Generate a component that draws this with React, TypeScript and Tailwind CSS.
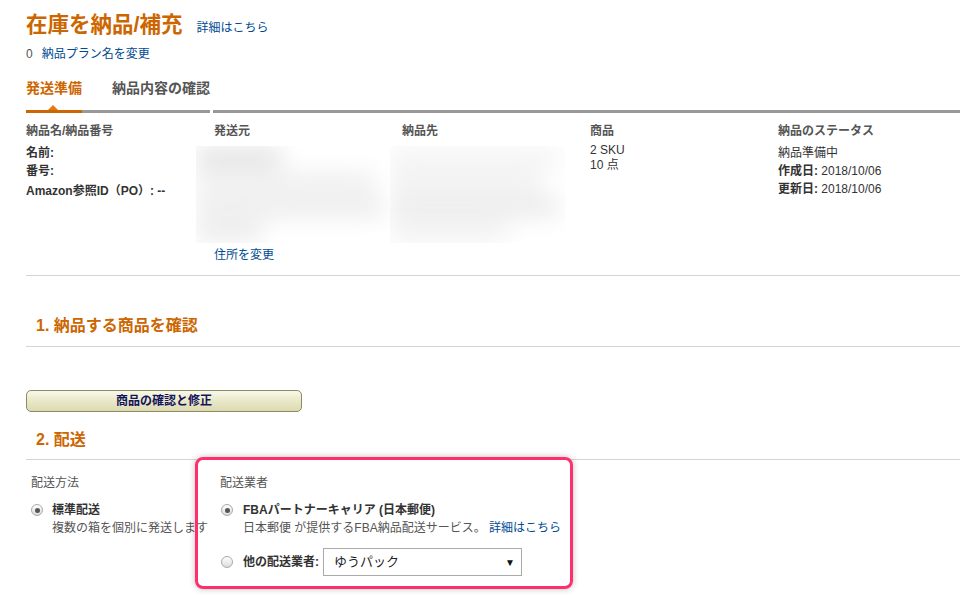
const font = "font-['Liberation_Sans','Noto_Sans_CJK_JP',sans-serif]";

function Radio({ checked }: { checked?: boolean }) {
  return (
    <span className="flex h-[12px] w-[12px] shrink-0 items-center justify-center rounded-full border border-[#a9a9a9] bg-gradient-to-b from-[#ffffff] to-[#dcdcdc]">
      {checked && <span className="h-[5px] w-[5px] rounded-full bg-[#555]" />}
    </span>
  );
}

function Blur({ w, ml, rows }: { w: string; ml: string; rows: string[] }) {
  return (
    <div className={`${w} ${ml} h-[97px] overflow-hidden bg-white`}>
      <div className="flex h-full flex-col gap-[12px] py-[6px] pr-[6px] blur-[12px]">
        {rows.map((r, i) => (
          <div key={i} className={`h-[16px] ${r}`} />
        ))}
      </div>
    </div>
  );
}

export default function App() {
  return (
    <div className={`${font} min-h-[597px] w-[960px] overflow-hidden bg-white pl-[26px] text-[12px] text-[#333]`}>
      {/* title */}
      <div className="flex items-baseline gap-[14px] pt-[11px]">
        <h1 className="text-[21.5px] font-bold leading-[28px] text-[#cc6600]">在庫を納品/補充</h1>
        <a className="text-[12px] text-[#004b91]">詳細はこちら</a>
      </div>
      <div className="mt-[7px] flex gap-[9px] leading-[16px]">
        <span className="text-[#555]">0</span>
        <a className="text-[#004b91]">納品プラン名を変更</a>
      </div>

      {/* tabs */}
      <div className="mt-[17px] flex text-[14px] font-bold leading-[18px]">
        <span className="w-[86px] text-[#cc6600]">発送準備</span>
        <span className="text-[#555]">納品内容の確認</span>
      </div>
      <div className="mt-[13px] flex h-[3px]">
        <div className="relative w-[56px] bg-[#cc6600]">
          <span className="absolute bottom-[3px] left-[22px] h-0 w-0 border-x-[5px] border-b-[5px] border-x-transparent border-b-[#e07b14]" />
        </div>
        <div className="w-[128px] bg-[#999]" />
        <div className="ml-[3px] flex-1 bg-[#999]" />
      </div>

      {/* summary */}
      <div className="mt-[10px] grid grid-cols-[188px_188px_188px_188px_1fr]">
        <div>
          <div className="font-bold leading-[16px] text-[#555]">納品名/納品番号</div>
          <div className="mt-[5px] font-bold leading-[18px]">
            <div>名前:</div>
            <div>番号:</div>
            <div className="mt-[2px]">Amazon参照ID（PO）: --</div>
          </div>
        </div>
        <div>
          <div className="font-bold leading-[16px] text-[#555]">発送元</div>
          <div className="mt-[7px]">
            <Blur
              w="w-[194px]"
              ml="-ml-[18px]"
              rows={["w-[45%] bg-[#cfcfcf]", "w-[95%] bg-[#e6e6e6]", "w-[100%] bg-[#e0e0e0]", "w-[35%] bg-[#dedede]"]}
            />
          </div>
          <a className="mt-[4px] block leading-[16px] text-[#004b91]">住所を変更</a>
        </div>
        <div>
          <div className="font-bold leading-[16px] text-[#555]">納品先</div>
          <div className="mt-[7px]">
            <Blur
              w="w-[175px]"
              ml="-ml-[12px]"
              rows={["w-[100%] bg-[#ececec]", "w-[90%] bg-[#e8e8e8]", "w-[100%] bg-[#dddddd]", "w-[70%] bg-[#e9e9e9]"]}
            />
          </div>
        </div>
        <div>
          <div className="font-bold leading-[16px] text-[#555]">商品</div>
          <div className="mt-[4px] leading-[15px]">
            <div>2 SKU</div>
            <div>10 点</div>
          </div>
        </div>
        <div>
          <div className="font-bold leading-[16px] text-[#555]">納品のステータス</div>
          <div className="mt-[5px] leading-[18px]">
            <div>納品準備中</div>
            <div>
              <b>作成日:</b> 2018/10/06
            </div>
            <div>
              <b>更新日:</b> 2018/10/06
            </div>
          </div>
        </div>
      </div>

      <div className="mt-[12px] h-px bg-[#d5d5d5]" />

      {/* step 1 */}
      <h2 className="mt-[40px] pl-[10px] text-[16px] font-bold leading-[20px] text-[#cc6600]">1. 納品する商品を確認</h2>
      <div className="mt-[10px] h-px bg-[#d5d5d5]" />
      <button className="mt-[43px] block h-[22px] w-[276px] rounded-[5px] border border-[#8c8a5e] bg-gradient-to-b from-[#f8f8ea] via-[#e9e8c8] to-[#dcdab2] text-[12px] font-bold leading-[20px] text-[#14145a]">
        商品の確認と修正
      </button>

      {/* step 2 */}
      <h2 className="mt-[18px] pl-[10px] text-[16px] font-bold leading-[20px] text-[#cc6600]">2. 配送</h2>
      <div className="mt-[9px] h-px bg-[#d5d5d5]" />

      <div className="relative flex pl-[5px]">
        <div className="w-[189px]">
          <div className="mt-[15px] leading-[16px] text-[#555]">配送方法</div>
          <div className="mt-[10px] flex">
            <div className="flex h-[18px] items-center">
              <Radio checked />
            </div>
            <div className="ml-[9px] leading-[18px]">
              <div className="font-bold">標準配送</div>
              <div className="whitespace-nowrap text-[#555]">複数の箱を個別に発送します</div>
            </div>
          </div>
        </div>
        <div className="flex-1">
          <div className="mt-[15px] leading-[16px] text-[#555]">配送業者</div>
          <div className="mt-[10px] flex">
            <div className="ml-[1px] flex h-[18px] items-center">
              <Radio checked />
            </div>
            <div className="ml-[10px] leading-[18px]">
              <div className="font-bold">FBAパートナーキャリア (日本郵便)</div>
              <div className="text-[#555]">
                日本郵便 が提供するFBA納品配送サービス。 <a className="text-[#004b91]">詳細はこちら</a>
              </div>
            </div>
          </div>
          <div className="mt-[11px] flex h-[28px] items-center">
            <div className="ml-[1px]">
              <Radio />
            </div>
            <span className="ml-[10px] font-bold">他の配送業者:</span>
            <div className="ml-[4px] flex h-[28px] w-[199px] items-center justify-between border border-[#aaa] bg-white pl-[10px] pr-[6px] text-[13px] text-[#222]">
              <span>ゆうパック</span>
              <span className="text-[10px] text-[#111]">▼</span>
            </div>
          </div>
        </div>

        {/* highlight annotation */}
        <div className="pointer-events-none absolute left-[169px] top-[-3px] h-[132px] w-[378px] rounded-[8px] border-[3px] border-[#ff2e6c] shadow-[0_0_6px_rgba(0,0,0,0.25)]" />
      </div>
    </div>
  );
}
